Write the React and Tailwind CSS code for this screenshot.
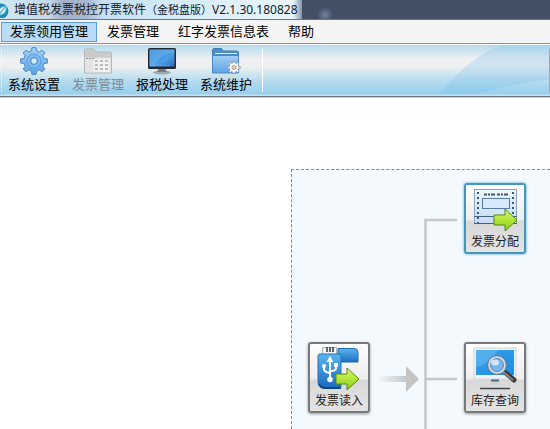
import React from "react";

const gearPath = (cx, cy, outer, inner, teeth) => {
  const points = [];
  const step = (Math.PI * 2) / teeth;
  for (let i = 0; i < teeth; i++) {
    const a = i * step - Math.PI / 2;
    [[-0.3, inner], [-0.2, outer], [0.2, outer], [0.3, inner]].forEach(([t, r]) => {
      points.push(`${(cx + r * Math.cos(a + t * step)).toFixed(2)} ${(cy + r * Math.sin(a + t * step)).toFixed(2)}`);
    });
  }
  return `M${points.join("L")}Z`;
};

function Gradients() {
  return (
    <svg className="absolute h-0 w-0" aria-hidden="true">
      <defs>
        <linearGradient id="blue" x1="0" y1="0" x2="0" y2="1">
          <stop offset="0" stopColor="#a3d0f6" />
          <stop offset="1" stopColor="#5ba3e4" />
        </linearGradient>
        <linearGradient id="screen" x1="0" y1="0" x2="1" y2="1">
          <stop offset="0" stopColor="#2f7fd0" />
          <stop offset="0.6" stopColor="#4d9fe6" />
          <stop offset="1" stopColor="#2a6cbb" />
        </linearGradient>
        <linearGradient id="usb" x1="0" y1="0" x2="0" y2="1">
          <stop offset="0" stopColor="#5bb4ee" />
          <stop offset="1" stopColor="#1c6dc2" />
        </linearGradient>
        <linearGradient id="display" x1="0" y1="0" x2="1" y2="1">
          <stop offset="0" stopColor="#3aa3ec" />
          <stop offset="1" stopColor="#1c8be0" />
        </linearGradient>
        <linearGradient id="green" x1="0" y1="0" x2="0" y2="1">
          <stop offset="0" stopColor="#dcf775" />
          <stop offset="0.5" stopColor="#b3e53a" />
          <stop offset="1" stopColor="#84c81c" />
        </linearGradient>
        <linearGradient id="paper" x1="0" y1="0" x2="0" y2="1">
          <stop offset="0" stopColor="#eef5fd" />
          <stop offset="1" stopColor="#c6dcf4" />
        </linearGradient>
        <linearGradient id="fade" gradientUnits="userSpaceOnUse" x1="84" y1="0" x2="115" y2="0">
          <stop offset="0" stopColor="#c9c9c9" stopOpacity="0" />
          <stop offset="1" stopColor="#c4c4c4" />
        </linearGradient>
      </defs>
    </svg>
  );
}

function GearIcon() {
  return (
    <svg viewBox="0 0 30 28" className="h-7 w-[30px]" aria-hidden="true">
      <path d={gearPath(15, 14, 13.5, 10.4, 8)} fill="url(#blue)" stroke="#4d88c0" strokeWidth="1" strokeLinejoin="round" />
      <circle cx="15" cy="14" r="7" fill="#7dbaf0" stroke="#569ddf" />
      <circle cx="15" cy="14" r="3.4" fill="#d4e9f6" stroke="#3c79b5" />
    </svg>
  );
}

function CalendarIcon() {
  return (
    <svg viewBox="0 0 30 28" className="h-7 w-[30px]" aria-hidden="true">
      <path d="M1.500 26V3l1-1h8l2 3h15l1 1v20z" fill="#c9cbcc" stroke="#b4b6b8" />
      <path d="M2 10.500h26v15H2z" fill="#e3e4e4" />
      <path d="M3 11.500h8" stroke="#8b8e91" strokeDasharray="2 1" />
      <path d="M10.500 12h16v13h-16z" fill="#f2f2f2" />
      <g fill="#b9bbbd">
        {[13, 17, 21].map((y) =>
          [12, 17, 22].map((x) => <rect key={`${x}-${y}`} x={x} y={y} width="3" height="2" />)
        )}
      </g>
    </svg>
  );
}

function MonitorIcon() {
  return (
    <svg viewBox="0 0 30 28" className="h-7 w-[30px]" aria-hidden="true">
      <ellipse cx="15" cy="25.500" rx="9" ry="2" fill="#a5a9ad" />
      <path d="M12 21h6l2 4H10z" fill="#777b80" />
      <rect x="1" y="1" width="28" height="21" rx="1.500" fill="#25292f" />
      <rect x="2.500" y="2.500" width="25" height="17" fill="url(#screen)" />
      <path d="M2.500 2.500h25v3q-14 0-20 14h-5z" fill="#6db9f4" opacity="0.5" />
      <path d="M7 18.500h15" stroke="#bd92a6" strokeDasharray="1 1" />
    </svg>
  );
}

function FolderIcon() {
  return (
    <svg viewBox="0 0 30 28" className="h-7 w-[30px]" aria-hidden="true">
      <path d="M1.500 25V3l1-1.500h8L12.500 4h14l1 1v20z" fill="#4c8fc8" stroke="#3f7cb4" />
      <path d="M4 6.500h22" stroke="#d9edfb" />
      <path d="M1.500 8.500h26V26h-26z" fill="url(#blue)" stroke="#4b88bf" />
      <path d={gearPath(23, 20.5, 6.3, 4.8, 8)} fill="#f6f6f6" stroke="#8a8f94" strokeWidth="0.8" />
      <circle cx="23" cy="20.500" r="2" fill="#e5ddd2" stroke="#8e8378" strokeWidth="0.8" />
    </svg>
  );
}

function Arrow({ x, y }) {
  return (
    <path
      transform={`translate(${x} ${y})`}
      d="M0 6h11V0l12 11-12 11v-6H0z"
      fill="url(#green)"
      stroke="#548b10"
      strokeLinejoin="round"
    />
  );
}

function InvoiceIcon() {
  return (
    <svg viewBox="0 0 50 46" className="h-[46px] w-[50px]" aria-hidden="true">
      <rect x="4.500" y="2.500" width="42" height="34" fill="url(#paper)" stroke="#86a2bd" />
      <path d="M8 5v31M43 5v31" stroke="#375879" strokeWidth="2" strokeDasharray="2 3" />
      <path d="M14 7.500h25" stroke="#465767" strokeWidth="2" strokeDasharray="3 1 2 1 4 2" />
      <rect x="12.500" y="11.500" width="27" height="10" fill="#d7e9fb" stroke="#587da2" />
      <path d="M4 29.500h43M4 36.500h43" stroke="#44617e" />
      <Arrow x={24} y={22} />
    </svg>
  );
}

function SearchMonitorIcon() {
  return (
    <svg viewBox="0 0 50 46" className="h-[46px] w-[50px]" aria-hidden="true">
      <rect x="4" y="2" width="42" height="31" fill="#eef3f7" stroke="#c5ccd2" strokeWidth="0.8" />
      <rect x="6" y="4" width="38" height="25" fill="url(#display)" />
      <path d="M6 4h22Q20 18 6 21z" fill="#8ccaf5" opacity="0.35" />
      <path d="M21 33h8v6h-8z" fill="#cbd2d8" />
      <path d="M21 34.500h8" stroke="#526775" strokeWidth="2" />
      <path d="M10 42.500h30" stroke="#3f454b" strokeWidth="1.500" />
      <path d="M36 27l8 7" stroke="#3d4043" strokeWidth="5" strokeLinecap="round" />
      <path d="M32 25l11 9" stroke="#999" strokeWidth="1.500" />
      <circle cx="27" cy="19" r="8" fill="#79b4ea" stroke="#d8dce0" strokeWidth="2.500" />
      <circle cx="27" cy="19" r="9.300" fill="none" stroke="#636b73" strokeWidth="0.8" />
      <circle cx="27" cy="19" r="6.500" fill="none" stroke="#4d7fb5" strokeWidth="0.8" />
      <ellipse cx="25" cy="16.500" rx="4" ry="3" fill="#e4f5ff" opacity="0.8" />
    </svg>
  );
}

function UsbIcon() {
  return (
    <svg viewBox="0 0 50 46" className="h-[46px] w-[50px]" aria-hidden="true">
      <path d="M24 2.500h16q4 0 4 4V16H24z" fill="url(#usb)" stroke="#1f6fae" />
      <path d="M8.500 1.500h14v9h-14z" fill="#f2f4f5" stroke="#aab0b5" />
      <path d="M13 1v5M16 1v5M19 1v5" stroke="#353a3e" strokeWidth="1.500" />
      <path d="M4 10q0-2 2-2h19q2 0 2 2v31H9q-5 0-5-5z" fill="url(#usb)" stroke="#2772b2" />
      <path d="M5 38q2 4 6 4h16" fill="none" stroke="#0f4688" strokeWidth="2" />
      <path d="M16 15v18M10 20v3q0 3 6 4M22 19v3q0 3-6 3" fill="none" stroke="#fff" strokeWidth="2" />
      <g fill="#fff">
        <path d="M16 10l3.500 6h-7z" />
        <circle cx="16" cy="33.500" r="2.700" />
        <circle cx="10" cy="20" r="2" />
        <path d="M20 17h4v4h-4z" />
      </g>
      <Arrow x={22} y={22} />
    </svg>
  );
}

function LogoIcon() {
  return (
    <svg viewBox="0 0 12 16" className="h-4 w-3 shrink-0" aria-hidden="true">
      <circle cx="1" cy="9" r="7.500" fill="#2389bd" />
      <path d="M-3 12Q-2 5 6 4Q7 12 0 13Z" fill="#d9f3fb" stroke="#66bfdc" />
      <path d="M-2 14L5 5" stroke="#2389bd" />
    </svg>
  );
}

const menus = ["发票领用管理", "发票管理", "红字发票信息表", "帮助"];

const tools = [
  { label: "系统设置", Icon: GearIcon },
  { label: "发票管理", Icon: CalendarIcon, disabled: true },
  { label: "报税处理", Icon: MonitorIcon },
  { label: "系统维护", Icon: FolderIcon },
];

function FlowNode({ label, Icon, active, place }) {
  return (
    <button
      type="button"
      className={`absolute flex h-[71px] w-[62px] flex-col items-center gap-px rounded-[3px] border-2 bg-[linear-gradient(#fdfdfd_0%,#eeeeee_52%,#d8d8d8_54%,#e4e4e4_100%)] pt-0.5 text-xs leading-4 text-[#222] ${
        active ? "border-[#4596b8] shadow-[0_0_3px_#4aa4cc]" : "border-[#777a7d] shadow-[0_1px_3px_#999]"
      } ${place}`}
    >
      <Icon />
      <span className="whitespace-nowrap">{label}</span>
    </button>
  );
}

export default function App() {
  return (
    <div className="flex h-screen flex-col overflow-hidden bg-white font-['Liberation_Sans','Noto_Sans_CJK_SC',sans-serif] text-[13px] text-black">
      <Gradients />
      <header className="flex h-5 shrink-0 items-center border-b border-[#6d747c] bg-[radial-gradient(circle_at_325px_15px,#7583a0_0px,#434f64_8px)]">
        <div className="flex h-full items-center gap-0.5 bg-[linear-gradient(90deg,#d2e9f5_0%,#c3d9ea_16%,#9fb0c8_21%,#a9bad0_29%,#c5e0f2_34%,#d7ecf7_60%,#e9f6fb_97%,#8795ab_100%)] pr-1">
          <LogoIcon />
          <h1 className="whitespace-nowrap font-['Noto_Sans','Noto_Sans_CJK_SC',sans-serif] text-xs leading-4 text-[#14202c]">
            增值税发票税控开票软件<span className="text-[11px]">（金税盘版）</span>V2.1.30.180828
          </h1>
        </div>
      </header>

      <nav className="flex h-6 shrink-0 items-center gap-px border-b border-[#8b9499] bg-[#f4f4f4] pl-px">
        {menus.map((name, i) => (
          <button
            key={name}
            type="button"
            className={`h-5 whitespace-nowrap border px-2 leading-4 ${
              i === 0 ? "border-[#5c9bd4] bg-[#b9dbf7]" : "border-transparent"
            }`}
          >
            {name}
          </button>
        ))}
      </nav>

      <div className="relative flex h-[53px] shrink-0 border-b border-t border-b-[#66737d] border-t-white bg-[linear-gradient(#b3dbed_0%,#efeff1_27%,#eef0f1_42%,#b9ddef_68%,#97d0ee_95%,#d5e3ea_100%)] pl-0.5">
        <svg className="absolute right-0 top-0 h-full w-[110px]" viewBox="0 0 110 52" preserveAspectRatio="none" aria-hidden="true">
          <path d="M0 50Q28 13 62 0H110V35Q70 40 36 50Z" fill="#67b5e6" opacity="0.22" />
          <path d="M109.500 4V48" stroke="#9aa9b2" />
        </svg>
        <span className="absolute bottom-1 left-px top-1 border-l border-dotted border-white" />
        {tools.map(({ label, Icon, disabled }) => (
          <button
            key={label}
            type="button"
            disabled={disabled}
            className={`relative flex w-16 flex-col items-center gap-0.5 pt-0.5 leading-4 ${disabled ? "text-[#7c8992]" : ""}`}
          >
            <Icon />
            <span className="whitespace-nowrap">{label}</span>
          </button>
        ))}
        <span className="my-1 ml-1 border-l border-white" />
      </div>

      <main className="flex flex-1 border-t border-[#cdd3d7] pl-[291px] pt-[71px]">
        <section className="relative flex-1 border-l border-t border-dashed border-[#85878a] bg-[#f3f9fd]">
          <svg className="absolute left-0 top-0 h-[260px] w-[258px]" viewBox="0 0 258 260" aria-hidden="true">
            <path d="M165 50H133.500V260M133 209h32" fill="none" stroke="#c5c7c9" strokeWidth="2.500" />
            <path d="M84 206h31v6H84z" fill="url(#fade)" />
            <path d="M114 196l13 13-13 13z" fill="#c4c4c4" />
          </svg>
          <FlowNode label="发票分配" Icon={InvoiceIcon} active place="left-[172px] top-[13px]" />
          <FlowNode label="发票读入" Icon={UsbIcon} place="left-[16px] top-[172px]" />
          <FlowNode label="库存查询" Icon={SearchMonitorIcon} place="left-[172px] top-[172px]" />
        </section>
      </main>
    </div>
  );
}
